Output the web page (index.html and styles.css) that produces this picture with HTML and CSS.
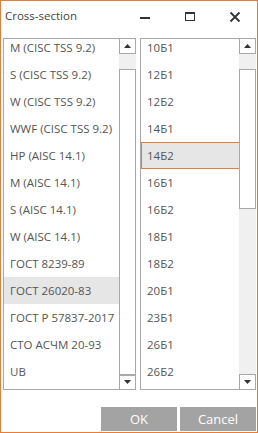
FILE: index.html
```html
<!DOCTYPE html>
<html lang="en">
<head>
    <meta charset="UTF-8">
    <title>Cross-section</title>
    <link rel="stylesheet" href="styles.css">
</head>
<body>
    <div class="window">
        <div class="titlebar">
            <span class="title">Cross-section</span>
            <div class="controls">
                <div class="ctl">
                    <svg width="12" height="12" viewBox="0 0 12 12"><rect x="1" y="6" width="10" height="2" fill="#333"/></svg>
                </div>
                <div class="ctl">
                    <svg width="12" height="12" viewBox="0 0 12 12"><rect x="1.5" y="1.5" width="9" height="8" fill="none" stroke="#333"/><rect x="1" y="1" width="10" height="2" fill="#333"/></svg>
                </div>
                <div class="ctl">
                    <svg width="12" height="12" viewBox="0 0 12 12"><path d="M1.5 1.5 L10.5 10.5 M10.5 1.5 L1.5 10.5" stroke="#333" stroke-width="1.8"/></svg>
                </div>
            </div>
        </div>

        <div class="lists">
            <div class="listbox left">
                <div class="items">
                    <ul>
                        <li>M (CISC TSS 9.2)</li>
                        <li>S (CISC TSS 9.2)</li>
                        <li>W (CISC TSS 9.2)</li>
                        <li>WWF (CISC TSS 9.2)</li>
                        <li>HP (AISC 14.1)</li>
                        <li>M (AISC 14.1)</li>
                        <li>S (AISC 14.1)</li>
                        <li>W (AISC 14.1)</li>
                        <li>ГОСТ 8239-89</li>
                        <li class="selected">ГОСТ 26020-83</li>
                        <li>ГОСТ Р 57837-2017</li>
                        <li>СТО АСЧМ 20-93</li>
                        <li>UB</li>
                    </ul>
                </div>
                <div class="scrollbar">
                    <div class="sb-btn"><svg width="7" height="4" viewBox="0 0 7 4"><polygon points="0,4 7,4 3.5,0" fill="#333"/></svg></div>
                    <div class="track">
                        <div class="thumb" style="height: 306px"></div>
                    </div>
                    <div class="sb-btn"><svg width="7" height="4" viewBox="0 0 7 4"><polygon points="0,0 7,0 3.5,4" fill="#333"/></svg></div>
                </div>
            </div>

            <div class="listbox right">
                <div class="items">
                    <ul>
                        <li>10Б1</li>
                        <li>12Б1</li>
                        <li>12Б2</li>
                        <li>14Б1</li>
                        <li class="current">14Б2</li>
                        <li>16Б1</li>
                        <li>16Б2</li>
                        <li>18Б1</li>
                        <li>18Б2</li>
                        <li>20Б1</li>
                        <li>23Б1</li>
                        <li>26Б1</li>
                        <li>26Б2</li>
                    </ul>
                </div>
                <div class="scrollbar">
                    <div class="sb-btn"><svg width="7" height="4" viewBox="0 0 7 4"><polygon points="0,4 7,4 3.5,0" fill="#333"/></svg></div>
                    <div class="track">
                        <div class="thumb" style="height: 140px"></div>
                    </div>
                    <div class="sb-btn"><svg width="7" height="4" viewBox="0 0 7 4"><polygon points="0,0 7,0 3.5,4" fill="#333"/></svg></div>
                </div>
            </div>
        </div>

        <div class="buttons">
            <button class="btn">OK</button>
            <button class="btn">Cancel</button>
        </div>
    </div>
</body>
</html>
```

FILE: styles.css
```css
body {
    margin: 0;
    font-family: 'Open Sans', 'Noto Sans', sans-serif;
    background: white;
}
.window {
    width: 258px;
    height: 433px;
    box-sizing: border-box;
    border: 1px solid #ee7b30;
    background: white;
    display: flex;
    flex-direction: column;
}
.titlebar {
    height: 37px;
    display: flex;
    align-items: flex-start;
    justify-content: space-between;
}
.title {
    padding: 7px 0 0 4px;
    font-size: 11.5px;
    color: #444;
}
.controls {
    display: flex;
}
.ctl {
    width: 45px;
    height: 30px;
    display: flex;
    align-items: center;
    justify-content: center;
    padding-top: 1px;
    box-sizing: border-box;
}
.lists {
    display: flex;
    gap: 4px;
    padding-left: 2px;
    height: 352px;
}
.listbox {
    box-sizing: border-box;
    height: 352px;
    border: 1px solid #a8a8a8;
    display: flex;
}
.left {
    width: 133px;
}
.right {
    width: 116px;
}
.items {
    flex: 1;
    overflow: hidden;
}
.items ul {
    list-style: none;
    margin: -5px 0 0 0;
    padding: 0;
}
.items li {
    height: 27px;
    line-height: 27px;
    padding-left: 6px;
    font-size: 11.5px;
    color: #555;
    white-space: nowrap;
    box-sizing: border-box;
}
.items li.selected {
    background: #e6e6e6;
}
.items li.current {
    background: #e6e6e6;
    border: 1px solid #ee7b30;
    border-right: none;
    padding-left: 5px;
    line-height: 25px;
}
.scrollbar {
    width: 17px;
    margin: -1px -1px -1px 0;
    display: flex;
    flex-direction: column;
}
.sb-btn {
    height: 16px;
    box-sizing: border-box;
    border: 1px solid #a8a8a8;
    background: white;
    display: flex;
    align-items: center;
    justify-content: center;
}
.track {
    flex: 1;
    background: #f0f0f0;
    padding-top: 15px;
}
.thumb {
    box-sizing: border-box;
    border: 1px solid #a8a8a8;
    background: white;
}
.buttons {
    display: flex;
    justify-content: flex-end;
    gap: 3px;
    padding: 17px 1px 0 0;
}
.btn {
    width: 76px;
    height: 24px;
    border: none;
    background: #a3a3a3;
    color: white;
    font-family: 'Open Sans', 'Noto Sans', sans-serif;
    font-size: 13px;
    padding: 0;
}
```
